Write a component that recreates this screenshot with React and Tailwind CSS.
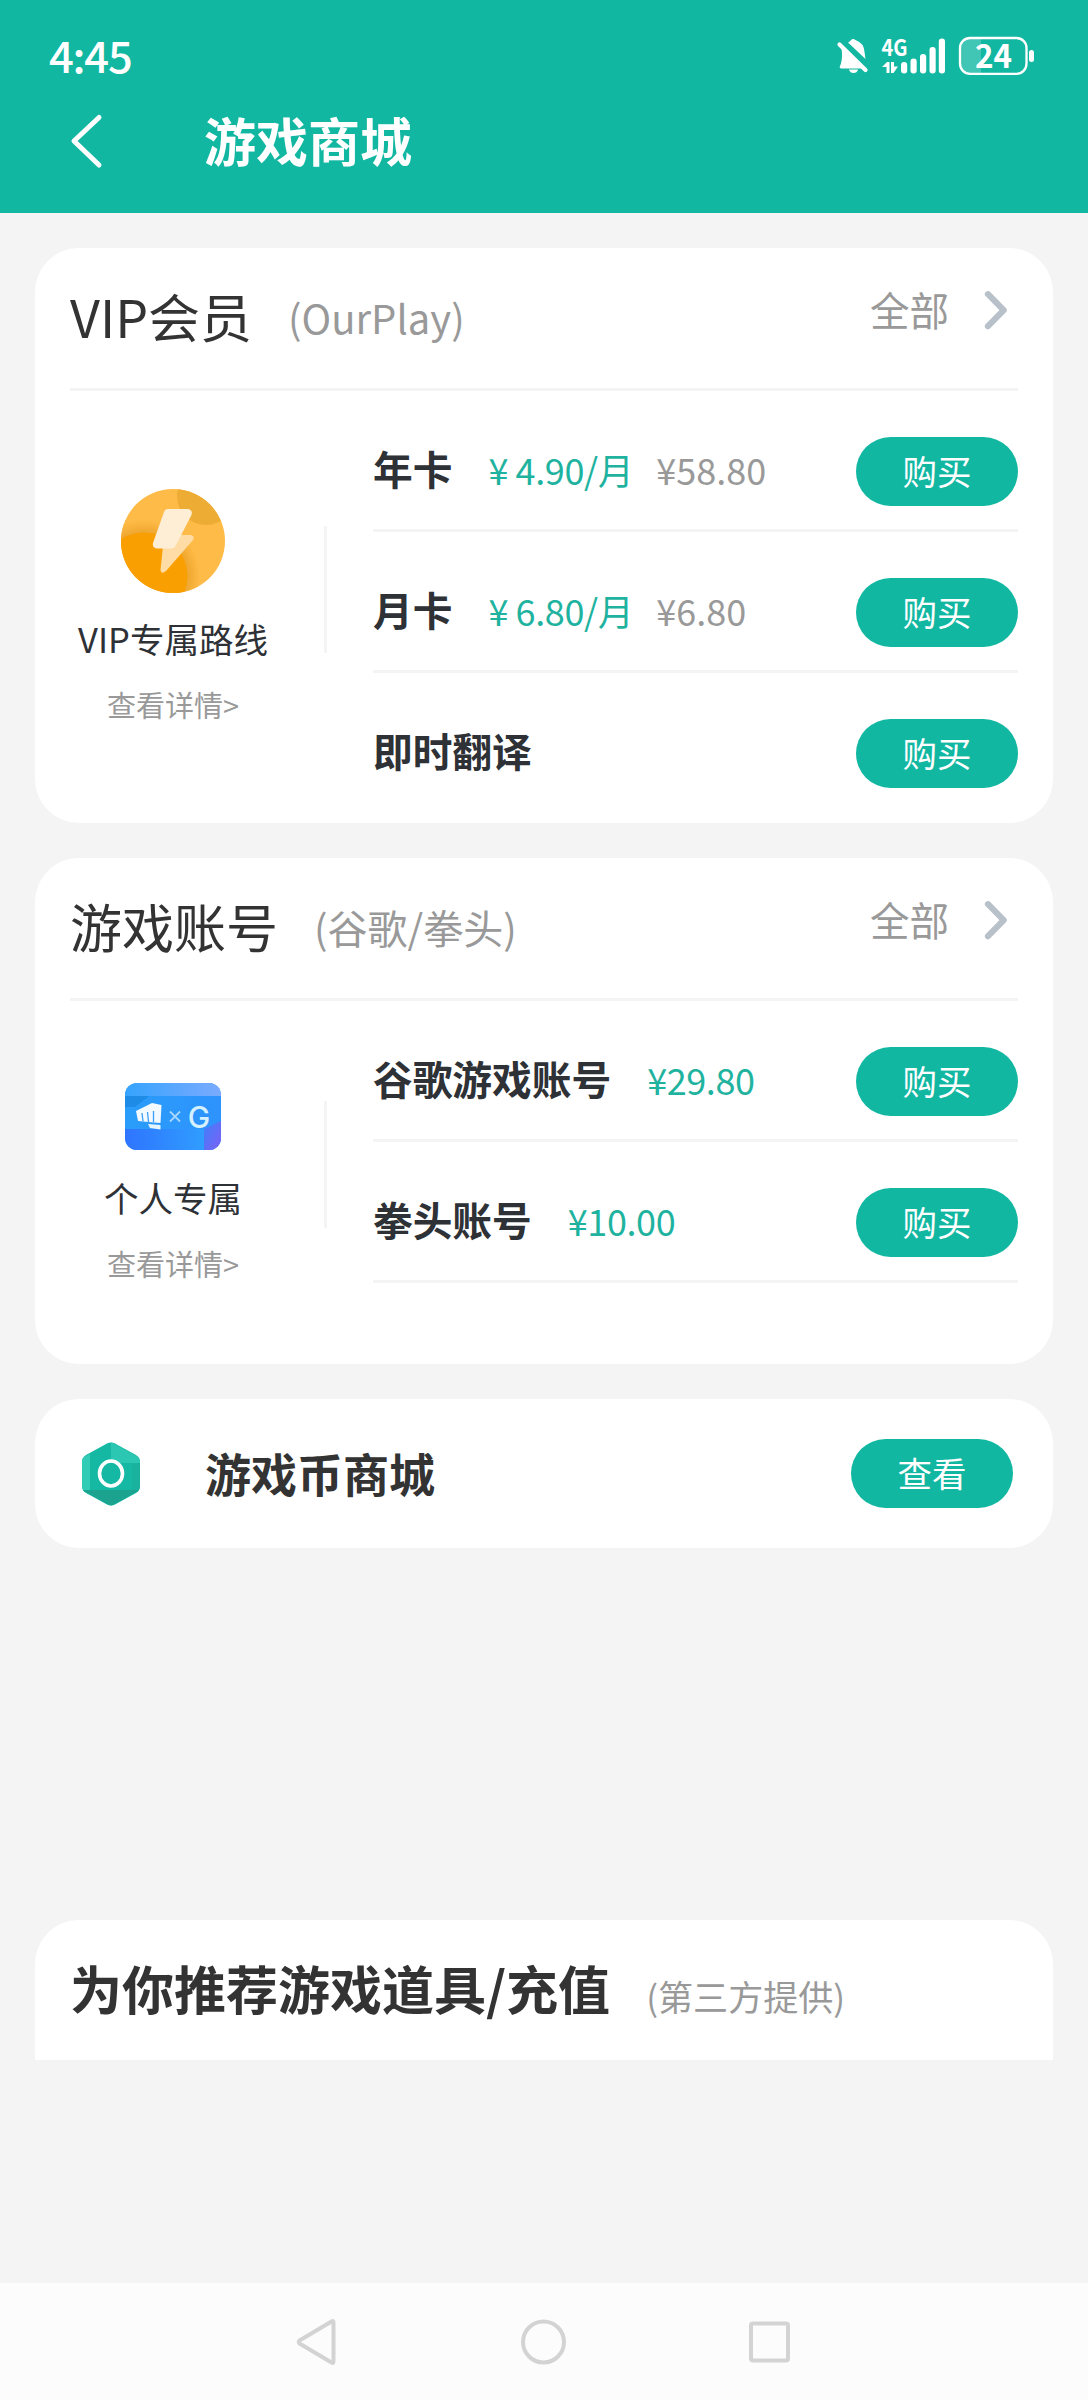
import React from "react";

const vipItems = [
  { name: "年卡", price: "¥ 4.90/月", oldPrice: "¥58.80" },
  { name: "月卡", price: "¥ 6.80/月", oldPrice: "¥6.80" },
  { name: "即时翻译" },
];

const accountItems = [
  { name: "谷歌游戏账号", price: "¥29.80" },
  { name: "拳头账号", price: "¥10.00" },
];

function StatusBar() {
  return (
    <div className="flex h-[75px] items-start justify-between pl-[49px] pr-[54px]">
      <span className="mt-[33px] text-[43.5px] leading-[44px] font-medium tracking-[-1.2px]">
        4:45
      </span>
      <svg
        className="mt-[14px]"
        width="200"
        height="76"
        viewBox="834 14 200 76"
        fill="currentColor"
      >
        {/* Muted bell */}
        <path d="M841 47 L864 68.5 H841.5 Q839 68.5 840 66 Q842 62 842 55 Q842 50 841 47 Z" />
        <path d="M848 42.5 Q850 41.5 851 40 Q853 38 855.5 40 Q864 43 864.5 52 L865.5 59 Z" />
        <path d="M849 69.5 H858 Q857 73 853.5 73 Q850 73 849 69.5 Z" />
        <path
          d="M839.5 44.5 L865.5 70"
          fill="none"
          stroke="currentColor"
          strokeWidth="4.2"
          strokeLinecap="round"
        />
        {/* Network */}
        <text x="881.5" y="56" fontSize="23" fontWeight="700" textLength="26" lengthAdjust="spacingAndGlyphs">
          4G
        </text>
        <path d="M882 67 L887 62 H889.5 V73 H886.5 V67 Z" />
        <path d="M891 62 H894 V66.5 H898 L893.5 73 H891 Z" />
        <rect x="901" y="62" width="6.2" height="11.5" rx="3" />
        <rect x="910.5" y="58.5" width="6.2" height="15" rx="3" />
        <rect x="920" y="54" width="6.2" height="19.5" rx="3" />
        <rect x="929.5" y="47" width="6.2" height="26.5" rx="3" />
        <rect x="938.8" y="38.5" width="6.2" height="35" rx="3" />
        {/* Battery */}
        <path d="M969.5 38.5 H981 V73.5 H969.5 Q960.5 73.5 960.5 64 V48 Q960.5 38.5 969.5 38.5 Z" opacity=".2" />
        <rect x="960" y="38" width="66.5" height="35.8" rx="10" fill="none" stroke="currentColor" strokeWidth="2.3" />
        <rect x="1029" y="50" width="5" height="12" rx="2.5" />
        <text x="975" y="68" fontSize="32.5" fontWeight="700" textLength="37" lengthAdjust="spacingAndGlyphs">
          24
        </text>
      </svg>
    </div>
  );
}

function Header() {
  return (
    <header className="h-[213px] bg-[#12b7a2] text-white">
      <StatusBar />
      <div className="flex h-[132px] items-center pl-[70px]">
        <svg width="34" height="58" viewBox="0 0 34 58" fill="none" stroke="currentColor">
          <path d="M29 5.5 L4 29 L29 53" strokeWidth="5" strokeLinecap="round" strokeLinejoin="round" />
        </svg>
        <h1 className="ml-[100px] pb-[2px] text-[52px] leading-none font-bold">游戏商城</h1>
      </div>
    </header>
  );
}

function CardHeader({ title, note }) {
  return (
    <div className="flex h-[143px] items-start border-b-[3px] border-[#f4f4f4]">
      <h2 className="pt-[42px] text-[52px] leading-none text-[#333]">{title}</h2>
      <span className="ml-[36px] pt-[49px] text-[40px] leading-none text-[#999]">({note})</span>
      <span className="ml-auto pt-[41px] text-[39.5px] leading-none text-[#999]">全部</span>
      <svg
        className="mt-[42px] mr-[7px] ml-[32px]"
        width="30"
        height="42"
        viewBox="0 0 30 42"
        fill="none"
        stroke="#b8c1ca"
      >
        <path d="M7 4.2 L22.7 20.2 L7 36.2" strokeWidth="6.2" strokeLinecap="round" strokeLinejoin="round" />
      </svg>
    </div>
  );
}

function PillButton({ children }) {
  return (
    <button className="flex h-[69px] w-[162px] shrink-0 justify-center rounded-full bg-[#12b7a2] pt-[16px] text-[34.5px] leading-[35px] text-white">
      {children}
    </button>
  );
}

function ItemRow({ item, divider }) {
  return (
    <div className={`flex h-[141px] items-start pt-[46px] ${divider ? "border-b-[3px] border-[#f4f4f4]" : ""}`}>
      <span className="pt-[11px] text-[39.7px] leading-[40px] font-bold text-[#2e3135]">{item.name}</span>
      {item.price && (
        <span className="ml-[36px] pt-[14px] text-[36px] leading-[36px] tracking-[-0.4px] text-[#1fb39f]">
          {item.price}
        </span>
      )}
      {item.oldPrice && (
        <span className="ml-[23px] pt-[14px] text-[36px] leading-[36px] text-[#999]">{item.oldPrice}</span>
      )}
      <div className="ml-auto">
        <PillButton>购买</PillButton>
      </div>
    </div>
  );
}

function BoltIcon() {
  return (
    <svg width="104" height="104" viewBox="0 0 104 104">
      <defs>
        <clipPath id="bolt-circle">
          <circle cx="52" cy="52" r="52" />
        </clipPath>
        <radialGradient id="bolt-glow">
          <stop offset="0.76" stopColor="#eda62f" />
          <stop offset="1" stopColor="#ffbb47" />
        </radialGradient>
      </defs>
      <g clipPath="url(#bolt-circle)">
        <rect width="104" height="104" fill="#ffbb47" />
        <circle cx="23" cy="87" r="56" fill="url(#bolt-glow)" />
        <circle cx="85" cy="7" r="29" fill="#edac34" />
        <circle cx="23" cy="87" r="43.5" fill="#fa9f02" />
      </g>
      <path d="M42 57 L58 46 H70 Q74 47 72 51 L45 82 Q40 86 39.5 81 Z" fill="#ffdca6" />
      <path d="M47 20 H67 Q72 21 70.5 26 L55 56 Q53 59.5 50 59.5 H35 Q31 58 32 54 L43 23 Q44 20 47 20 Z" fill="#ffeed6" />
    </svg>
  );
}

function AccountIcon() {
  return (
    <svg width="96" height="67" viewBox="0 0 96 67">
      <defs>
        <clipPath id="account-card">
          <rect width="96" height="67" rx="12" />
        </clipPath>
        <linearGradient id="account-top">
          <stop offset="0" stopColor="#35a3fd" />
          <stop offset="1" stopColor="#7babff" />
        </linearGradient>
        <linearGradient id="account-mid">
          <stop offset="0" stopColor="#2a9dfa" />
          <stop offset="1" stopColor="#2d92fd" />
        </linearGradient>
        <linearGradient id="account-low">
          <stop offset="0" stopColor="#2f74ff" />
          <stop offset="0.8" stopColor="#2f9cff" />
        </linearGradient>
        <linearGradient id="account-corner" x1="0" y1="0" x2="1" y2="1">
          <stop offset="0" stopColor="#3b80fa" />
          <stop offset="1" stopColor="#8060f5" />
        </linearGradient>
      </defs>
      <g clipPath="url(#account-card)">
        <rect width="96" height="67" fill="url(#account-mid)" />
        <rect width="96" height="13" fill="url(#account-top)" />
        <path d="M0 13 H24 L10 24 H0 Z" fill="#1a85dd" opacity=".7" />
        <rect y="46" width="96" height="21" fill="url(#account-low)" />
        <path d="M79 46 L96 38 V67 H79 Z" fill="url(#account-corner)" />
      </g>
      <path d="M11 28 L27 20 L36.5 22 L35.5 40 L23 39 L13 38 Z" fill="#f2faff" />
      <path d="M23 41 L35.5 42 V46.5 L25 45 Z" fill="#e6f5ff" />
      <path d="M17 30 L18 38.5 M22.5 29 L23.5 39 M28.5 28 L28.5 39" stroke="#3a9ff8" strokeWidth="1.3" />
      <path d="M45 28.5 L55 38.5 M55 28.5 L45 38.5" stroke="#a5d6ff" strokeWidth="1.8" />
      <text x="74" y="44.5" textAnchor="middle" fontFamily="Inter, sans-serif" fontSize="30" fontWeight="500" fill="#d5f0ff">
        G
      </text>
    </svg>
  );
}

function CoinIcon() {
  return (
    <svg width="58" height="64" viewBox="0 0 58 64">
      <defs>
        <clipPath id="coin-hex">
          <path d="M25 1.5 Q29 -0.5 33 1.5 L54 13 Q58 15.5 58 20 V44 Q58 48.5 54 51 L33 62.5 Q29 64.5 25 62.5 L4 51 Q0 48.5 0 44 V20 Q0 15.5 4 13 Z" />
        </clipPath>
      </defs>
      <g clipPath="url(#coin-hex)">
        <rect width="58" height="64" fill="#14b8a3" />
        <path d="M29 0 L58 16 V21 H29 Z" fill="#2cc7b2" />
        <path d="M0 16 L8 12 V52 L0 48 Z" fill="#30ccb6" />
        <path d="M8 48 H58 L29 64 L0 48 Z" fill="#1ba390" />
        <path d="M50 21 H58 V48 H50 Z" fill="#19b29e" />
      </g>
      <ellipse cx="29" cy="31.5" rx="11.5" ry="12.5" fill="none" stroke="#fff" strokeWidth="3.6" />
    </svg>
  );
}

function ProductCard({ title, note, icon, iconClass, labelClass, label, items, lastDivider, className, barClass }) {
  return (
    <section className={`rounded-[44px] bg-white px-[35px] ${className}`}>
      <CardHeader title={title} note={note} />
      <div className="flex items-start">
        <div className={`flex w-[206px] flex-col items-center ${iconClass}`}>
          {icon}
          <p className={`text-[34.5px] leading-[35px] whitespace-nowrap text-[#2e3135] ${labelClass}`}>{label}</p>
          <p className="mt-[33px] text-[29px] leading-[30px] whitespace-nowrap text-[#999]">查看详情&gt;</p>
        </div>
        <div className={`ml-[48px] h-[127px] w-[3px] bg-[#f4f4f4] ${barClass}`} />
        <div className="ml-[46px] flex-1">
          {items.map((item, i) => (
            <ItemRow key={item.name} item={item} divider={lastDivider || i < items.length - 1} />
          ))}
        </div>
      </div>
    </section>
  );
}

function NavBar() {
  return (
    <nav className="flex h-[117px] items-center justify-between bg-[#fcfcfc] px-[293px]">
      <svg width="48" height="48" viewBox="0 0 48 48" fill="none" stroke="#d3d3d3" strokeWidth="4">
        <path d="M38.5 3.5 Q40.5 2 40.5 5 V43 Q40.5 46 38.5 44.5 L6.5 25.5 Q5 24 6.5 22.5 Z" strokeLinejoin="round" />
      </svg>
      <svg width="48" height="48" viewBox="0 0 48 48" fill="none" stroke="#d3d3d3" strokeWidth="4">
        <circle cx="23.5" cy="24" r="20.5" />
      </svg>
      <svg width="48" height="48" viewBox="0 0 48 48" fill="none" stroke="#d3d3d3" strokeWidth="4">
        <rect x="4" y="5.5" width="37" height="37" rx="2" />
      </svg>
    </nav>
  );
}

function App() {
  return (
    <div className="flex h-[2400px] w-[1088px] flex-col overflow-hidden bg-[#f4f4f4] font-['Noto_Sans_CJK_SC',sans-serif]">
      <Header />
      <main className="flex flex-1 flex-col px-[35px] pt-[35px]">
        <ProductCard
          className="h-[575px]"
          title="VIP会员"
          note="OurPlay"
          icon={<BoltIcon />}
          iconClass="pt-[98px]"
          labelClass="mt-[28px]"
          barClass="mt-[135px]"
          label="VIP专属路线"
          items={vipItems}
        />
        <ProductCard
          className="mt-[35px] h-[506px]"
          title="游戏账号"
          note="谷歌/拳头"
          icon={<AccountIcon />}
          iconClass="pt-[82px]"
          labelClass="mt-[30px]"
          barClass="mt-[100px]"
          label="个人专属"
          items={accountItems}
          lastDivider
        />

        {/* Coin store */}
        <section className="mt-[35px] flex h-[149px] items-center rounded-[44px] bg-white pr-[40px] pl-[47px]">
          <CoinIcon />
          <h2 className="ml-[65px] pb-[4px] text-[46px] leading-none font-bold text-[#333]">游戏币商城</h2>
          <div className="ml-auto">
            <PillButton>查看</PillButton>
          </div>
        </section>

        {/* Recommendations */}
        <section className="mt-[372px] flex h-[140px] items-start rounded-t-[44px] bg-white px-[35px]">
          <h2 className="pt-[42px] text-[52px] leading-none font-bold text-[#333]">为你推荐游戏道具/充值</h2>
          <span className="ml-[36px] pt-[58px] text-[35.1px] leading-[35px] text-[#999]">(第三方提供)</span>
        </section>
      </main>
      <NavBar />
    </div>
  );
}

export default App;
